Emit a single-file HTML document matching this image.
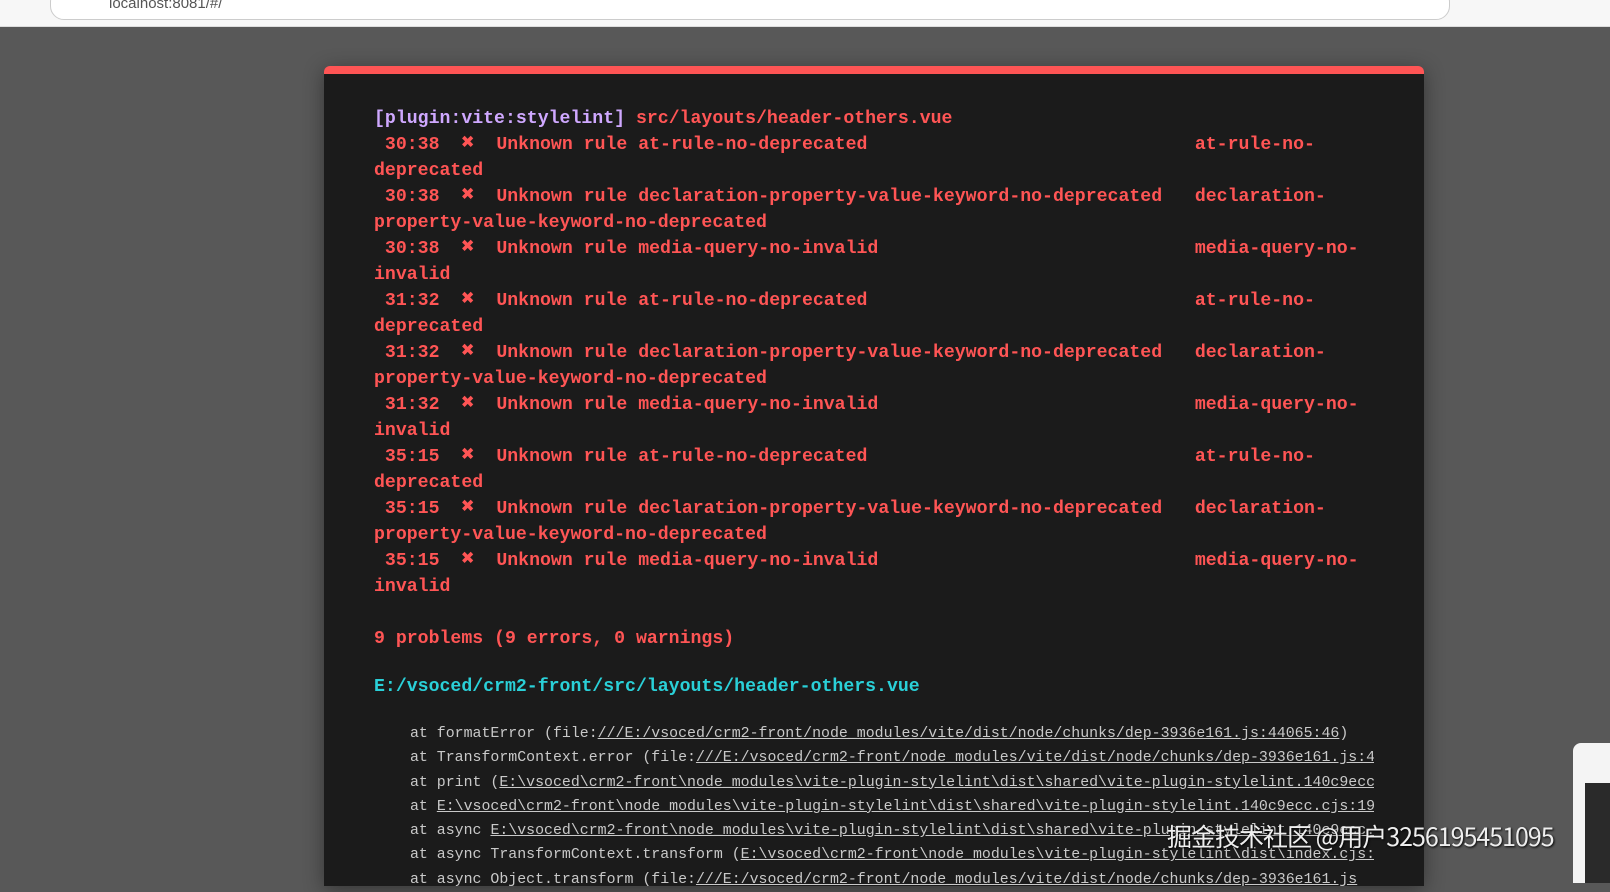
<!DOCTYPE html>
<html><head><meta charset="utf-8"><style>
*{margin:0;padding:0;box-sizing:border-box}
html,body{width:1610px;height:875px;overflow:hidden;background:#585858;font-family:"Liberation Mono",monospace}
.top{position:absolute;left:0;top:0;width:1610px;height:27px;background:#f7f7f7;border-bottom:1px solid #ddd}
.url{position:absolute;left:50px;top:-12px;width:1400px;height:32px;background:#fff;border:1px solid #ccc;border-radius:14px}
.url span{position:absolute;left:58px;top:6px;font:15px "Liberation Sans",sans-serif;color:#555}
.box{position:absolute;left:324px;top:66px;width:1100px;height:820px;background:#1b1b1b;border-top:8px solid #ff5555;border-radius:6px 6px 0 0;box-shadow:0 4px 20px rgba(0,0,0,.4)}
pre{position:absolute;left:50px;font-family:"Liberation Mono","DejaVu Sans Mono",monospace;font-size:18.2px;line-height:26px;color:#ff5555;white-space:pre;font-weight:bold}
.p{color:#cfa8ff;font-weight:bold}
.x{display:inline-block;width:1ch;text-align:center;font-weight:bold;font-size:22px;line-height:18px}
.stack{position:absolute;left:86px;top:648px;width:964px;overflow:hidden;font-size:14.9px;line-height:24.3px;color:#c9c9c9;font-weight:normal}
.stack u{text-decoration:underline}
.wm{position:absolute;left:1167px;top:818px;font:25px "Noto Sans CJK SC",sans-serif;color:#eee;text-shadow:1px 1px 2px #000;letter-spacing:-1px}
.wid{position:absolute;left:1573px;top:743px;width:40px;height:140px;background:#f4f4f4;border-radius:8px 0 0 0}
.wid div{position:absolute;left:12px;top:40px;width:28px;height:100px;background:#2a2a2a}
</style></head><body>
<div class="top"><div class="url"><span>localhost:8081/#/</span></div></div>
<div class="box">
<pre style="top:32px"><span class="p">[plugin:vite:stylelint]</span> src/layouts/header-others.vue
 30:38  <span class="x">✖</span>  Unknown rule at-rule-no-deprecated                              at-rule-no-
deprecated
 30:38  <span class="x">✖</span>  Unknown rule declaration-property-value-keyword-no-deprecated   declaration-
property-value-keyword-no-deprecated
 30:38  <span class="x">✖</span>  Unknown rule media-query-no-invalid                             media-query-no-
invalid
 31:32  <span class="x">✖</span>  Unknown rule at-rule-no-deprecated                              at-rule-no-
deprecated
 31:32  <span class="x">✖</span>  Unknown rule declaration-property-value-keyword-no-deprecated   declaration-
property-value-keyword-no-deprecated
 31:32  <span class="x">✖</span>  Unknown rule media-query-no-invalid                             media-query-no-
invalid
 35:15  <span class="x">✖</span>  Unknown rule at-rule-no-deprecated                              at-rule-no-
deprecated
 35:15  <span class="x">✖</span>  Unknown rule declaration-property-value-keyword-no-deprecated   declaration-
property-value-keyword-no-deprecated
 35:15  <span class="x">✖</span>  Unknown rule media-query-no-invalid                             media-query-no-
invalid

9 problems (9 errors, 0 warnings)</pre>
<pre style="top:600px;color:#2ad0d8">E:/vsoced/crm2-front/src/layouts/header-others.vue</pre>
<pre class="stack">at formatError (file:<u>///E:/vsoced/crm2-front/node_modules/vite/dist/node/chunks/dep-3936e161.js:44065:46</u>)
at TransformContext.error (file:<u>///E:/vsoced/crm2-front/node_modules/vite/dist/node/chunks/dep-3936e161.js:44061:19</u>)
at print (<u>E:\vsoced\crm2-front\node_modules\vite-plugin-stylelint\dist\shared\vite-plugin-stylelint.140c9ecc.cjs:1</u>)
at <u>E:\vsoced\crm2-front\node_modules\vite-plugin-stylelint\dist\shared\vite-plugin-stylelint.140c9ecc.cjs:19</u>
at async <u>E:\vsoced\crm2-front\node_modules\vite-plugin-stylelint\dist\shared\vite-plugin-stylelint.140c9ecc.cjs</u>
at async TransformContext.transform (<u>E:\vsoced\crm2-front\node_modules\vite-plugin-stylelint\dist\index.cjs:</u>
at async Object.transform (file:<u>///E:/vsoced/crm2-front/node_modules/vite/dist/node/chunks/dep-3936e161.js</u></pre>
</div>
<div class="wid"><div></div></div>
<div class="wm">掘金技术社区 @用户3256195451095</div>
</body></html>
